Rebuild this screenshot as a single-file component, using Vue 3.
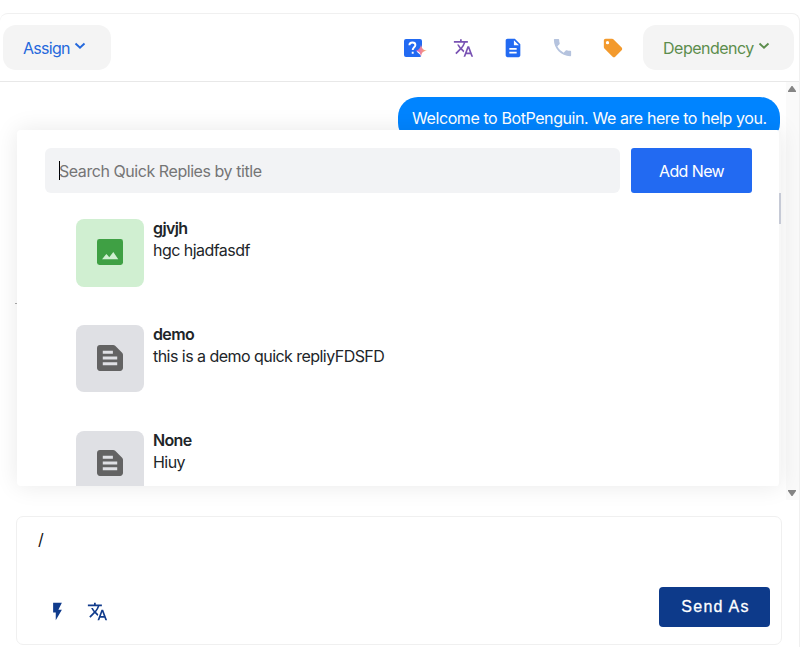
<script setup>
const replies = [
  { title: 'gjvjh', text: 'hgc hjadfasdf', kind: 'image' },
  { title: 'demo', text: 'this is a demo quick repliyFDSFD', kind: 'text' },
  { title: 'None', text: 'Hiuy', kind: 'text' },
]
const translatePath = 'M12.87 15.07l-2.54-2.51.03-.03A17.52 17.52 0 0 0 14.07 6H17V4h-7V2H8v2H1v1.99h11.17C11.5 7.92 10.44 9.75 9 11.35 8.07 10.32 7.3 9.19 6.69 8h-2c.73 1.63 1.73 3.17 2.98 4.56l-5.09 5.02L4 19l5-5 3.11 3.11.76-2.04zM18.5 10h-2L12 22h2l1.12-3h4.75L21 22h2l-4.5-12zm-2.62 7l1.62-4.33L19.12 17h-3.24z'
</script>

<template>
  <div class="page">
    <div class="shell">
      <header class="bar">
        <button class="pill assign">
          <span class="assign-label">Assign</span>
          <svg class="chev" viewBox="0 0 12 8"><path d="M1.5 1.5 6 5.8l4.5-4.3" /></svg>
        </button>
        <div class="tools">
          <svg class="tool ask" viewBox="0 0 24 22">
            <path d="M3 2h14a2 2 0 0 1 2 2v5l-1.5 4-4 1.5 4 3.5.5 1.5-1 .5H3a2 2 0 0 1-2-2V4a2 2 0 0 1 2-2z" fill="#226af2" />
            <path d="M6.4 8.2c0-3.700 6-3.500 6-.2 0 2.200-2.700 2.400-2.700 5M9.700 14.700v2" fill="none" stroke="#fff" stroke-width="1.900" />
            <path d="M18 7.500c.8 4.200 1.800 5.300 6 6.100-4.200.8-5.200 1.900-6 6.100-.8-4.200-1.800-5.300-6-6.100 4.200-.8 5.200-1.900 6-6.100z" fill="url(#spark)" />
            <defs>
              <linearGradient id="spark" x1="0" y1="0" x2="1" y2="0">
                <stop offset="0" stop-color="#b84fd8" /><stop offset=".5" stop-color="#f0839a" /><stop offset="1" stop-color="#f5b65c" />
              </linearGradient>
            </defs>
          </svg>
          <svg class="tool purple" viewBox="0 0 24 24"><path :d="translatePath" /></svg>
          <svg class="tool doc" viewBox="0 0 24 24"><path d="M14 2H6c-1.100 0-2 .9-2 2v16c0 1.100.9 2 2 2h12c1.100 0 2-.9 2-2V8l-6-6zm2 16H8v-2h8v2zm0-4H8v-2h8v2zm-3-5V3.500L18.500 9H13z" /></svg>
          <svg class="tool phone" viewBox="0 0 24 24"><path d="M6.620 10.790c1.440 2.830 3.760 5.140 6.590 6.590l2.200-2.200c.27-.27.67-.36 1.020-.24 1.120.37 2.330.57 3.570.57.55 0 1 .45 1 1V20c0 .55-.45 1-1 1-9.390 0-17-7.610-17-17 0-.55.45-1 1-1h3.500c.55 0 1 .45 1 1 0 1.250.2 2.450.57 3.570.11.35.03.74-.25 1.020l-2.200 2.200z" /></svg>
          <svg class="tool tag" viewBox="0 0 24 24"><path d="M21.410 11.580l-9-9C12.050 2.220 11.550 2 11 2H4c-1.100 0-2 .9-2 2v7c0 .55.22 1.050.59 1.420l9 9c.36.36.86.58 1.410.58s1.050-.22 1.410-.59l7-7c.37-.36.59-.86.59-1.410s-.23-1.060-.59-1.420zM6 8A1.800 1.800 0 1 1 6 4.400 1.800 1.800 0 0 1 6 8z" /></svg>
        </div>
        <button class="pill dependency">
          <span class="dep-label">Dependency</span>
          <svg class="chev" viewBox="0 0 12 8"><path d="M1.5 1.5 6 5.8l4.5-4.3" /></svg>
        </button>
      </header>

      <main class="chat">
        <div class="messages">
          <div class="bubble"><span>Welcome to BotPenguin. We are here to help you.</span></div>
        </div>
        <div class="scroll">
          <svg viewBox="0 0 8 6"><path d="M3.500 0h1L8 5v1H0V5z" /></svg>
          <svg viewBox="0 0 8 6"><path d="M0 0h8v1L4.500 6h-1L0 1z" /></svg>
        </div>
        <i class="tick"></i>
        <section class="popup">
          <div class="search-row">
            <div class="search"><i class="caret"></i><span>Search Quick Replies by title</span></div>
            <button class="add"><span>Add New</span></button>
          </div>
          <div class="list">
            <article v-for="r in replies" :key="r.title" class="reply">
              <div class="thumb" :class="r.kind">
                <svg v-if="r.kind === 'image'" viewBox="3 3 18 18"><rect x="3" y="3" width="18" height="18" rx="1.700" fill="#3fa044" /><path d="M6.500 17l3-3.700 2 2.300 2.800-3.600 3.400 5z" fill="#d0efd1" /></svg>
                <svg v-else viewBox="3 3 18 18"><path d="M20.410 8.410l-4.830-4.830c-.37-.37-.88-.58-1.410-.58H5c-1.100 0-2 .9-2 2v14c0 1.100.9 2 2 2h14c1.100 0 2-.9 2-2V9.830c0-.53-.21-1.040-.59-1.420zM7 7h7v2H7V7zm10 10H7v-2h10v2zm0-4H7v-2h10v2z" fill="#636363" /></svg>
              </div>
              <div class="copy">
                <strong>{{ r.title }}</strong>
                <p>{{ r.text }}</p>
              </div>
            </article>
          </div>
          <i class="thumbbar"></i>
        </section>
      </main>

      <section class="composer">
        <div class="typed">/</div>
        <div class="actions">
          <svg class="bolt" viewBox="0 0 24 24"><path d="M7 2v11h3v9l7-12h-4l4-8z" /></svg>
          <svg class="trans" viewBox="0 0 24 24"><path :d="translatePath" /></svg>
          <button class="send">Send As</button>
        </div>
      </section>
    </div>
  </div>
</template>

<style>
body { background: #fff; overflow: hidden; }
</style>

<style scoped>
* { box-sizing: border-box; }
.page { height: 647px; padding-top: 13px; font: 16px/22px Inter, "Liberation Sans", sans-serif; overflow: hidden; color: #212529; }
button { border: 0; font: inherit; padding: 0; }
svg { display: block; flex: none; }
span, strong, p, .typed { white-space: nowrap; }
.shell { width: 800px; height: 660px; border: solid #f0f0f0; border-width: 1px 1px 0 0; border-radius: 8px 8px 0 0; display: flex; flex-direction: column; }
.bar { height: 68px; border-bottom: 1px solid #e8e8e8; display: flex; align-items: center; padding: 0 5px 0 3px; flex: none; }
.pill { height: 45px; border-radius: 13px; background: #f4f4f4; display: flex; align-items: center; padding-top: 1px; }
.assign { width: 108px; padding-left: 20px; color: #2468dc; gap: 4px; }
.assign-label { letter-spacing: -0.7px; }
.dependency { width: 151px; padding-left: 20px; color: #5c8d4c; gap: 4px; }
.dep-label { letter-spacing: -0.5px; }
.chev { width: 12px; height: 8px; margin-top: -4px; fill: none; stroke: currentColor; stroke-width: 1.9; }
.tools { margin-left: auto; display: flex; align-items: center; margin-right: 19px; gap: 28px; }
.tool { width: 22px; height: 22px; }
.ask { width: 24px; margin-right: -2px; }
.purple { fill: #7952b3; width: 21px; }
.doc { fill: #226af2; }
.phone { fill: #b5c3de; width: 23px; height: 23px; margin-left: -1px; }
.tag { fill: #f39a2d; }
.chat { position: relative; height: 418px; flex: none; display: flex; }
.messages { flex: 1; padding: 15px 6px 0 16px; display: flex; align-items: flex-start; justify-content: flex-end; }
.bubble { width: 382px; height: 46px; border-radius: 20px; background: #0084ff; color: #fff; padding: 10px 0 0 14px; letter-spacing: -0.41px; }
.scroll { width: 13px; background: #fafafa; padding: 4px 3px 4px 2px; display: flex; flex-direction: column; justify-content: space-between; fill: #858585; }
.scroll svg { width: 8px; height: 6px; }
.tick { position: absolute; left: 15px; top: 221px; width: 2px; height: 1px; background: #aaa; }
.popup { position: absolute; left: 17px; top: 48px; width: 764px; height: 356px; background: #fff; border-radius: 4px; border-right: 2px solid #f7f7f7; box-shadow: 0 0 24px rgba(0,0,0,.09); clip-path: inset(-34px -18px -34px -17px); }
.search-row { display: flex; gap: 11px; padding: 18px 0 0 28px; }
.search { width: 575px; height: 45px; border-radius: 6px; background: #f2f3f5; color: #757575; display: flex; align-items: center; padding: 0 0 0 14px; letter-spacing: -0.44px; }
.caret { width: 1px; height: 19px; background: #000; margin: 0 -1px 0 0; }
.add { width: 121px; height: 45px; background: #226af2; color: #fff; border-radius: 3px; padding-top: 1px; letter-spacing: -0.6px; }
.list { height: 293px; overflow: hidden; padding: 26px 0 0 59px; display: flex; flex-direction: column; gap: 38px; }
.reply { display: flex; gap: 9px; height: 68px; flex: none; }
.thumb { width: 68px; height: 68px; border-radius: 8px; display: flex; align-items: center; justify-content: center; padding-bottom: 2px; }
.thumb svg { width: 26px; height: 26px; }
.thumb.image { background: #d0efd1; }
.thumb.text { background: #dfe0e4; height: 67px; }
.reply:last-child .thumb { padding-bottom: 4px; }
.copy { margin-top: -2px; letter-spacing: -0.54px; }
.copy strong { display: block; font-weight: 600; letter-spacing: -0.65px; }
.copy p { margin: 0; }
.thumbbar { position: absolute; right: -2px; top: 63px; width: 2px; height: 31px; background: #c6cad6; }
.composer { margin: 16px 0 0 16px; width: 766px; height: 129px; flex: none; border: 1px solid #f0f0f0; border-radius: 7px; padding: 11px 11px 17px 21px; display: flex; flex-direction: column; justify-content: space-between; }
.typed { color: #111; }
.actions { display: flex; align-items: center; height: 40px; }
.actions svg { fill: #103b8c; }
.bolt { width: 21px; height: 21px; margin-left: 9px; margin-top: 9px; }
.trans { width: 21px; height: 21px; margin: 9px 0 0 19px; }
.send { margin-left: auto; width: 111px; height: 40px; border-radius: 4px; background: #0d3a8a; color: #fff; font-family: "Liberation Sans", sans-serif; font-size: 16px; font-weight: 400; -webkit-text-stroke: 0.3px #fff; letter-spacing: 1.25px; padding-left: 2px; }
</style>
